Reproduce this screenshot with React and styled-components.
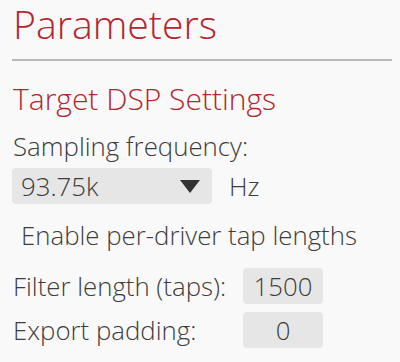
import React from "react";
import styled, { createGlobalStyle } from "styled-components";

const Global = createGlobalStyle`
  html, body { margin: 0; padding: 0; background: #f9f9f9; }
  body { font-family: "Open Sans", "Noto Sans", sans-serif; color: #3d3d3d; font-weight: 350; }
`;

const Panel = styled.div`
  width: 400px;
  height: 362px;
  box-sizing: border-box;
  padding: 0 8px 0 12px;
  display: flex;
  flex-direction: column;
  overflow: hidden;
`;

const Title = styled.h1`
  margin: 0;
  font-size: 39.2px;
  line-height: 48px;
  font-weight: 350;
  color: #b3262f;
  padding-left: 1px;
`;

const Rule = styled.div`
  margin-top: 11px;
  height: 2px;
  background: #b9b9b9;
`;

const Section = styled.h2`
  margin: 20px 0 0;
  font-size: 30px;
  line-height: 36px;
  font-weight: 350;
  color: #b3262f;
  padding-left: 1px;
`;

const Label = styled.div`
  margin-top: ${(p) => p.$mt || 0}px;
  padding-left: ${(p) => p.$indent || 1}px;
  font-size: 25.8px;
  line-height: 32px;
`;

const SelectRow = styled.div`
  margin-top: 6px;
  display: flex;
  align-items: center;
`;

const SelectBox = styled.div`
  width: 200px;
  height: 36px;
  box-sizing: border-box;
  padding: 0 12px 0 9px;
  border-radius: 4px;
  background: #e6e6e6;
  display: flex;
  align-items: center;
  justify-content: space-between;
  font-size: 25.8px;
`;

const Arrow = styled.svg`
  width: 20px;
  height: 13px;
  display: block;
`;

const Unit = styled.span`
  margin-left: 17px;
  font-size: 25.8px;
`;

const Grid = styled.div`
  margin-top: 17px;
  display: grid;
  grid-template-columns: 231px 80px;
  row-gap: 8px;
  align-items: center;
`;

const RowLabel = styled.div`
  font-size: 25.8px;
  line-height: 32px;
  padding-left: 1px;
  white-space: nowrap;
`;

const NumBox = styled.div`
  height: 36px;
  border-radius: 4px;
  background: #e6e6e6;
  display: flex;
  align-items: center;
  justify-content: center;
  font-size: 25.8px;
`;

export default function App() {
  return (
    <>
      <Global />
      <Panel>
        <Title>Parameters</Title>
        <Rule />
        <Section>Target DSP Settings</Section>
        <Label $mt={13}>Sampling frequency:</Label>
        <SelectRow>
          <SelectBox>
            <span>93.75k</span>
            <Arrow viewBox="0 0 20 13">
              <polygon points="0,0 20,0 10,13" fill="#333" />
            </Arrow>
          </SelectBox>
          <Unit>Hz</Unit>
        </SelectRow>
        <Label $mt={15} $indent={9}>Enable per-driver tap lengths</Label>
        <Grid>
          <RowLabel>Filter length (taps):</RowLabel>
          <NumBox>1500</NumBox>
          <RowLabel>Export padding:</RowLabel>
          <NumBox>0</NumBox>
        </Grid>
      </Panel>
    </>
  );
}
